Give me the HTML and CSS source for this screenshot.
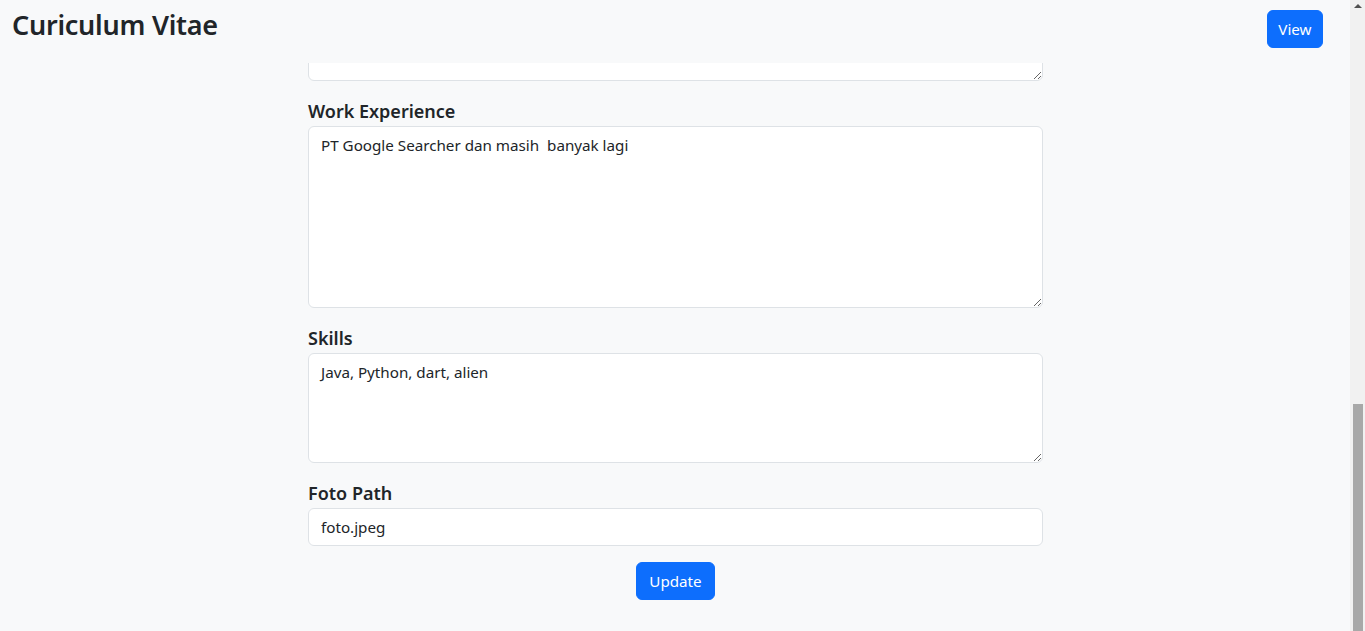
FILE: index.html
```html
<!DOCTYPE html>
<html lang="id">
<head>
<meta charset="utf-8">
<title>Curiculum Vitae</title>
<link rel="stylesheet" href="styles.css">
</head>
<body>
<div class="app">
  <header class="topbar">
    <h1 class="brand">Curiculum Vitae</h1>
    <a class="btn btn-primary btn-view" href="#">View</a>
  </header>
  <main class="viewport">
    <form class="cv-form">
      <div class="field">
        <textarea class="control area-md"></textarea>
      </div>
      <div class="field">
        <label class="field-label">Work Experience</label>
        <textarea class="control area-lg">PT Google Searcher dan masih  banyak lagi</textarea>
      </div>
      <div class="field">
        <label class="field-label">Skills</label>
        <textarea class="control area-md">Java, Python, dart, alien</textarea>
      </div>
      <div class="field">
        <label class="field-label">Foto Path</label>
        <input class="control" type="text" value="foto.jpeg">
      </div>
      <div class="actions">
        <button class="btn btn-primary" type="button">Update</button>
      </div>
    </form>
  </main>
</div>
<div class="scrollbar">
  <div class="scroll-arrow"></div>
  <div class="scroll-track">
    <div class="scroll-thumb"></div>
  </div>
</div>
</body>
</html>
```
FILE: styles.css
```css
* { box-sizing: border-box; }
html, body { height: 100%; }
body {
  margin: 0;
  background: #f8f9fa;
  color: #212529;
  font-family: "Noto Sans", "Open Sans", sans-serif;
  font-size: 15.2px;
  line-height: 1.5;
  display: flex;
  overflow: hidden;
}
.app {
  flex: 1;
  min-width: 0;
  display: flex;
  flex-direction: column;
  height: 100%;
}
.topbar {
  flex: 0 0 63px;
  background: #f8f9fa;
  display: flex;
  justify-content: space-between;
  align-items: flex-start;
  padding: 0 27px 0 12px;
}
.brand {
  margin: 9px 0 0;
  font-size: 27px;
  font-weight: 600;
  letter-spacing: -0.25px;
  line-height: 1.2;
}
.btn {
  display: inline-block;
  border: 1px solid #0d6efd;
  border-radius: 6px;
  padding: 6px 12px;
  font-family: inherit;
  font-size: 15.2px;
  line-height: 24px;
  text-decoration: none;
  cursor: pointer;
}
.btn-primary { background: #0d6efd; color: #fff; }
.btn-view { margin-top: 10px; padding: 6px 10.5px; }
.viewport {
  flex: 1;
  min-height: 0;
  overflow: hidden;
  display: flex;
  flex-direction: column;
  justify-content: flex-end;
}
.cv-form {
  width: 736px;
  margin: 0 auto;
  flex-shrink: 0;
  display: flex;
  flex-direction: column;
  padding-left: 1px;
}
.field { margin-bottom: 19px; display: flex; flex-direction: column; }
.field-label {
  font-size: 18px;
  font-weight: 600;
  line-height: 22px;
  margin-bottom: 4px;
}
.control {
  display: block;
  width: 100%;
  border: 1px solid #dee2e6;
  border-radius: 6px;
  background: #fff;
  color: #212529;
  padding: 6px 12px;
  font-family: inherit;
  font-size: 15.2px;
  line-height: 24px;
  height: 38px;
}
textarea.control { resize: vertical; }
.area-lg { height: 182px; }
.area-md { height: 110px; }
.actions {
  display: flex;
  justify-content: center;
  padding-bottom: 31px;
  margin-top: -3px;
}
.scrollbar {
  flex: 0 0 15px;
  height: 100%;
  background: #f1f1f1;
  display: flex;
  flex-direction: column;
}
.scroll-arrow {
  flex: 0 0 15px;
  display: flex;
  justify-content: center;
  padding-top: 4px;
}
.scroll-arrow::before {
  content: "";
  width: 0;
  height: 0;
  border-left: 4px solid transparent;
  border-right: 4px solid transparent;
  border-bottom: 4px solid #505050;
}
.scroll-track {
  flex: 1;
  display: flex;
  flex-direction: column;
  justify-content: flex-end;
  padding: 0 2px 0 3px;
}
.scroll-thumb {
  height: 227px;
  background: #a8a8a8;
}
```
